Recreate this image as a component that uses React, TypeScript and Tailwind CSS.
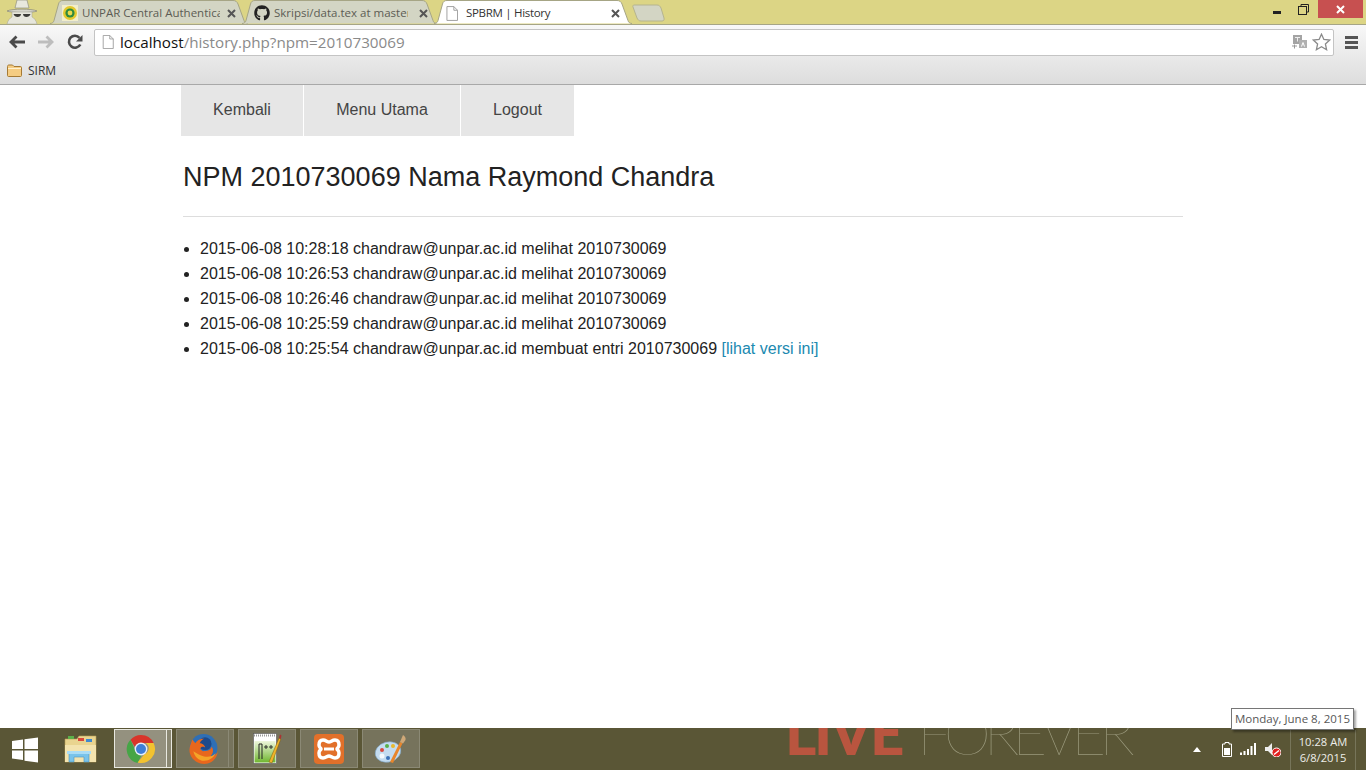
import React from "react";
import { FaGithub } from "react-icons/fa";

const uiFont = "font-['Open_Sans','Noto_Sans',sans-serif]";

const history = [
  "2015-06-08 10:28:18 chandraw@unpar.ac.id melihat 2010730069",
  "2015-06-08 10:26:53 chandraw@unpar.ac.id melihat 2010730069",
  "2015-06-08 10:26:46 chandraw@unpar.ac.id melihat 2010730069",
  "2015-06-08 10:25:59 chandraw@unpar.ac.id melihat 2010730069",
];

const PageIcon = ({ className }: { className?: string }) => (
  <svg className={className} viewBox="0 0 13 16" fill="none">
    <path d="M1 .5h7.500L12.500 4.500v11H1z" fill="#fff" stroke="#9a9a9a" />
    <path d="M8.500.5v4h4" stroke="#9a9a9a" />
  </svg>
);

const CloseX = ({ color = "#555" }: { color?: string }) => (
  <svg width="9" height="9" viewBox="0 0 9 9">
    <path d="M1 1l7 7M8 1L1 8" stroke={color} strokeWidth="2" />
  </svg>
);

const tabPath = (w: number) =>
  `M0 23.500C2 23.500 3.500 22.500 4 20.500L8.500 4C9.200 1.500 10.500 .5 13 .5L${w - 15} .5C${w - 12.5} .5 ${w - 11} 1.500 ${w - 10} 4L${w - 4} 20.500C${w - 3.5} 22.500 ${w - 2} 23.500 ${w} 23.500`;

const Tab = ({
  width,
  active,
  icon,
  title,
  textWidth,
  closeGap,
}: {
  width: number;
  active?: boolean;
  icon: React.ReactNode;
  title: string;
  textWidth: string;
  closeGap: string;
}) => (
  <div className="relative h-[24px] shrink-0" style={{ width }}>
    <svg className="absolute inset-0" width={width} height="24" viewBox={`0 0 ${width} 24`}>
      <path d={tabPath(width)} fill={active ? "#fff" : "#d3d5c4"} stroke="#a6a585" />
    </svg>
    <div className="relative flex h-full items-center pl-[12px] pt-[2px]">
      <div className="flex w-[20px] shrink-0 items-center">{icon}</div>
      <div
        className={`${textWidth} shrink-0 overflow-hidden whitespace-nowrap ${uiFont} ${active ? "text-[11.5px] tracking-[-0.3px] text-[#333]" : "text-[11.5px] text-[#5c5c54]"}`}
      >
        {title}
      </div>
      <div className={closeGap}>
        <CloseX />
      </div>
    </div>
  </div>
);

const UnparIcon = () => (
  <svg width="16" height="16" viewBox="0 0 16 16">
    <rect width="16" height="16" fill="#f2eecb" />
    <circle cx="8" cy="8" r="7" fill="#e3c92c" />
    <circle cx="8" cy="8" r="4.600" fill="#2f8a3e" />
    <circle cx="8" cy="8" r="2.400" fill="#e9d94a" />
  </svg>
);

const Chrome = () => (
  <svg width="30" height="30" viewBox="0 0 30 30">
    <path d="M15 1a14 14 0 0 1 12.600 8H15a6 6 0 0 0-6 4L4.500 5.800A14 14 0 0 1 15 1z" fill="#d8352a" />
    <path d="M4.500 5.800L9.600 17a6 6 0 0 0 6 4l-4 8A14 14 0 0 1 4.500 5.800z" fill="#46a546" />
    <path d="M27.600 9A14 14 0 0 1 11.600 28.600L18.500 20A6 6 0 0 0 19.500 9z" fill="#f2c230" />
    <circle cx="15" cy="15" r="6.400" fill="#e8eef8" />
    <circle cx="15" cy="15" r="5" fill="#3f7fd6" />
  </svg>
);

const Firefox = () => (
  <svg width="32" height="32" viewBox="0 0 30 30">
    <circle cx="15.500" cy="14" r="13" fill="#2f6fb5" />
    <circle cx="17" cy="10" r="6" fill="#1c4a8c" />
    <path d="M5 6c-1 3-4 8-2 14 2 6 8 9 13 9 7 0 12-5 13-12-1 3-4 5-7 5 3-3 3-7 1-9-1 4-5 4-8 4-3-1-3-3-1-4 1 0 2 0 3 .5 0-2-3-4-5-4 1-2 2-3 4-4-4 0-7 2-8 4-1-1-2-2-3-3.500z" fill="#e8671d" />
    <path d="M6 17c1 5 5 9 10 9 5 0 9-3 11-7-3 3-7 4-11 3-4-1-7-3-10-5z" fill="#f4a428" />
  </svg>
);

const NotepadPlus = () => (
  <svg width="32" height="34" viewBox="0 0 30 34">
    <rect x="1.500" y="1.500" width="23" height="30" fill="#fff" stroke="#555" strokeWidth=".6" />
    <defs>
      <linearGradient id="npp" x1="0" y1="0" x2="0" y2="1">
        <stop offset="0" stopColor="#eef6dc" />
        <stop offset="1" stopColor="#6fb62f" />
      </linearGradient>
    </defs>
    <rect x="2.500" y="9" width="21" height="21.500" fill="url(#npp)" />
    <path d="M2 3.500h22" stroke="#999" strokeDasharray="1 1" strokeWidth="2" />
    <path d="M7 27V12h3v15" stroke="#222" fill="none" strokeWidth="1" />
    <path d="M12 15h4M14 13v4M17 15h4M19 13v4" stroke="#222" strokeWidth=".9" />
    <path d="M17 30L27 6l1.800 1L20 31z" fill="#f0b429" stroke="#7a5a10" strokeWidth=".5" />
    <path d="M27 6l1-3.500 1.500 1-.7 3.500z" fill="#a33" />
  </svg>
);

const Xampp = () => (
  <svg width="32" height="32" viewBox="0 0 32 32">
    <rect x="1" y="1" width="30" height="30" rx="4" fill="#e2702a" />
    <path
      d="M10 7c3 0 4 2 6 2s3-2 6-2 4 2 4 5-2 3-2 4 2 1 2 4-1 5-4 5-4-2-6-2-3 2-6 2-4-2-4-5 2-3 2-4-2-1-2-4 1-5 4-5z"
      fill="none"
      stroke="#fff"
      strokeWidth="3.500"
    />
    <path d="M11 16h10" stroke="#fff" strokeWidth="3" />
  </svg>
);

const Palette = () => (
  <svg width="34" height="32" viewBox="0 0 34 32">
    <ellipse cx="14" cy="19" rx="13" ry="10" transform="rotate(-15 14 19)" fill="#c4dcf0" stroke="#7ea6c6" strokeWidth=".6" />
    <circle cx="8" cy="17" r="2" fill="#d9483b" />
    <circle cx="13" cy="13" r="2" fill="#59b14a" />
    <circle cx="19" cy="13" r="2" fill="#e8b92e" />
    <circle cx="8" cy="23" r="2.500" fill="#f4f9fd" />
    <circle cx="14" cy="25" r="2" fill="#3d72b8" />
    <path d="M16 29L26 9l2.500 1.200L19 30z" fill="#e8862c" />
    <path d="M26 9l3-7c2 1 3 3 2.500 5L29 10.500z" fill="#cfa878" />
  </svg>
);

const ExplorerIcon = () => (
  <svg width="34" height="32" viewBox="0 0 34 32">
    <path d="M1 6h12l2-3h17v26H1z" fill="#e9d48f" stroke="#b59c55" strokeWidth=".6" />
    <rect x="4" y="3" width="6" height="3" fill="#5bb04a" />
    <rect x="14" y="5" width="6" height="3" fill="#d9483b" />
    <rect x="22" y="6" width="6" height="3" fill="#3f8ad0" />
    <path d="M1 12h31v17H1z" fill="#f3e3ae" />
    <path d="M5 29V19h20v10h-5v-5h-10v5z" fill="#79c3ea" stroke="#4b93bf" strokeWidth=".6" />
    <path d="M3 18h24v3H3z" fill="#a9dcf5" />
  </svg>
);

const TaskButton = ({
  width,
  active,
  stack,
  children,
}: {
  width: string;
  active?: boolean;
  stack?: boolean;
  children: React.ReactNode;
}) => (
  <div className="flex h-[39px] shrink-0">
    <div
      className={`flex ${width} items-center justify-center border ${active ? "border-[#e8e8e0] bg-[#94917f]" : "border-[#8b8975] bg-[#76735c]"}`}
    >
      {children}
    </div>
    {stack && (
      <div className={`w-[5px] border border-l-0 ${active ? "border-[#e8e8e0] bg-[#8a8772]" : "border-[#8b8975] bg-[#76735c]"}`} />
    )}
  </div>
);

export default function App() {
  return (
    <div className="flex h-screen flex-col overflow-hidden bg-white font-['Liberation_Sans',Arial,sans-serif]">
      {/* tab strip */}
      <div className="relative flex h-[24px] shrink-0 bg-[#dcd585] pl-[50px]">
        <svg className="absolute left-[4px] top-0" width="36" height="24" viewBox="0 0 36 24">
          <path d="M11 8l2-8h10l2 8z" fill="#e8e8de" stroke="#8f8f80" strokeWidth=".7" />
          <path d="M3 11c5-2.500 25-2.500 30 0-4 2-26 2-30 0z" fill="#d6d6cc" stroke="#85857a" strokeWidth=".7" />
          <path d="M8 12h20v5c2 1 4 3 5 7H3c1-4 3-6 5-7z" fill="#e6e6dc" stroke="#a0a094" strokeWidth=".5" />
          <path d="M9.500 14h7.500c0 4-6.500 4-7.500 0zM19 14h7.500c-1 4-7.500 4-7.500 0z" fill="#3c3c38" />
        </svg>
        <Tab width={198} icon={<UnparIcon />} title="UNPAR Central Authentication" textWidth="w-[138px]" closeGap="ml-[7px]" />
        <div className="-ml-[6px]">
          <Tab width={195} icon={<FaGithub className="text-[16px] text-[#222]" />} title="Skripsi/data.tex at master" textWidth="w-[134px]" closeGap="ml-[11px]" />
        </div>
        <div className="-ml-[3px]">
          <Tab width={198} active icon={<PageIcon className="h-[15px] w-[12px]" />} title="SPBRM | History" textWidth="w-[129px]" closeGap="ml-[16px]" />
        </div>
        <svg className="mt-[4px]" width="34" height="18" viewBox="0 0 34 18">
          <path d="M2 1h23c2 0 3 1 4 3l3 10c.5 2-.5 3-2 3H9c-2 0-3-1-4-3L1 3c-.4-1 0-2 1-2z" fill="#d3d5c4" stroke="#b5b48f" />
        </svg>
        <div className="ml-auto flex h-[18px] items-start">
          <div className="mr-[17px] mt-[11px] h-[2.500px] w-[8px] bg-[#222]" />
          <svg className="mr-[9px] mt-[4px]" width="11" height="11" viewBox="0 0 11 11" fill="none">
            <path d="M3 2.500V.5h7.500v7.500H8.500" stroke="#222" />
            <rect x=".5" y="2.500" width="8" height="8" stroke="#222" />
          </svg>
          <div className="mr-[3px] flex h-[18px] w-[45px] items-center justify-center bg-[#c75050]">
            <CloseX color="#fff" />
          </div>
        </div>
      </div>

      {/* toolbar */}
      <div className="shrink-0 border-b border-t border-b-[#a8a8a8] border-t-[#a6a585] bg-gradient-to-b from-[#f8f8f8] to-[#dddddd]">
        <div className="flex h-[34px] items-center">
          <div className="flex w-[94px] shrink-0 items-center pl-[9px]">
            <svg width="16" height="14" viewBox="0 0 16 14" fill="none">
              <path d="M7.500 1.500L2 7l5.500 5.500M2 7h14" stroke="#4a4a4a" strokeWidth="2.800" />
            </svg>
            <svg className="ml-[13px]" width="16" height="14" viewBox="0 0 16 14" fill="none">
              <path d="M8.500 1.500L14 7l-5.500 5.500M14 7H0" stroke="#bdbdbd" strokeWidth="2.800" />
            </svg>
            <svg className="ml-[13px]" width="16" height="16" viewBox="0 0 16 16" fill="none">
              <path d="M13.300 10.500A6 6 0 1 1 12.500 3.800" stroke="#4a4a4a" strokeWidth="2.600" />
              <path d="M15.500 1v6.500H9z" fill="#4a4a4a" />
            </svg>
          </div>
          <div className="flex h-[27px] w-[1240px] shrink-0 items-center rounded-[2px] border border-[#c4c4c4] bg-white pl-[7px] pr-[2px]">
            <PageIcon className="h-[14px] w-[12px] shrink-0" />
            <div className={`ml-[6px] flex-1 text-[15.2px] text-[#8a8a8a] ${uiFont}`}>
              <span className="text-[#111]">localhost</span>/history.php?npm=2010730069
            </div>
            <svg width="16" height="16" viewBox="0 0 16 16">
              <rect x="1" y="1" width="9" height="9" fill="#a4a4a4" />
              <rect x="7" y="6" width="8" height="8" fill="#b0b0b0" />
              <path d="M3 3.500h5M5.500 3.500v4" stroke="#eee" />
              <path d="M9.500 12.500l1.500-4 1.500 4" stroke="#fff" fill="none" />
              <path d="M0 12h5M2.500 10.500v4" stroke="#999" />
            </svg>
            <svg className="ml-[4px]" width="19" height="18" viewBox="0 0 19 18" fill="#fff" stroke="#8a8a8a" strokeWidth="1.300">
              <path d="M9.500 1.200l2.400 5.300 5.800.6-4.300 3.900 1.200 5.700-5.100-2.900-5.100 2.900 1.200-5.700L1.300 7.100l5.800-.6z" />
            </svg>
          </div>
          <div className="ml-[11px] flex flex-col gap-[2px]">
            <div className="h-[3px] w-[13px] bg-[#555]" />
            <div className="h-[3px] w-[13px] bg-[#555]" />
            <div className="h-[3px] w-[13px] bg-[#555]" />
          </div>
        </div>
        <div className="flex h-[25px] items-center pb-[2px] pl-[7px]">
          <svg width="15" height="13" viewBox="0 0 15 13">
            <path d="M.5 2.500C.5 1.500 1 1 2 1h3.500L7 2.500h6.500c.7 0 1 .5 1 1v8c0 .7-.5 1-1 1h-12c-.6 0-1-.4-1-1z" fill="#f5cc82" stroke="#a57a35" />
            <path d="M1 4.500h13" stroke="#fff1cf" />
          </svg>
          <span className={`ml-[6px] text-[12px] text-[#333] ${uiFont}`}>SIRM</span>
        </div>
      </div>

      {/* page */}
      <main className="flex-1 overflow-hidden">
        <nav className="ml-[181px] flex h-[51px] w-fit gap-px text-[16px] text-[#444]">
          <a className="flex w-[122px] items-center justify-center bg-[#e6e6e6] pb-[2px]">Kembali</a>
          <a className="flex w-[156px] items-center justify-center bg-[#e6e6e6] pb-[2px]">Menu Utama</a>
          <a className="flex w-[113px] items-center justify-center bg-[#e6e6e6] pb-[2px]">Logout</a>
        </nav>
        <div className="ml-[183px] w-[1000px] text-[#222]">
          <h3 className="mt-[24px] text-[27px] leading-[34px]">NPM 2010730069 Nama Raymond Chandra</h3>
          <hr className="mt-[22px] border-[#dddddd]" />
          <ul className="mt-[19px] list-disc pl-[17px] text-[16px] leading-[25px]">
            {history.map((line, i) => (
              <li key={i}>{line}</li>
            ))}
            <li>
              2015-06-08 10:25:54 chandraw@unpar.ac.id membuat entri 2010730069{" "}
              <a className="text-[#2089b0]">[lihat versi ini]</a>
            </li>
          </ul>
        </div>
      </main>

      {/* taskbar */}
      <div className="relative flex h-[42px] shrink-0 items-start overflow-visible bg-[#5a5636] pt-[1px]">
        <div className="absolute inset-0 overflow-hidden">
          <div className="absolute left-[785px] top-[-26px] flex items-baseline gap-[15px] whitespace-nowrap font-['Lato','Liberation_Sans',sans-serif] text-[60px] leading-[60px]">
            <span className="font-black text-[#b9553f] [letter-spacing:-2.200px]">LIVE</span>
            <span className="font-thin text-[#9a997c] [letter-spacing:-7px]">FOREVER</span>
          </div>
        </div>
        <div className="relative flex w-[114px] shrink-0 items-center pl-[12px]">
          <svg className="mt-[6px]" width="26" height="26" viewBox="0 0 26 26" fill="#fff">
            <path d="M0 4l11-1.500V12H0zM12.500 2.300L26 .5V12H12.500zM0 13.500h11V23L0 21.500zM12.500 13.500H26V25.500L12.500 23.700z" />
          </svg>
          <div className="ml-[26px] mt-[4px]">
            <ExplorerIcon />
          </div>
        </div>
        <div className="relative flex items-center gap-[4px]">
          <TaskButton width="w-[53px]" active stack>
            <Chrome />
          </TaskButton>
          <TaskButton width="w-[53px]" stack>
            <Firefox />
          </TaskButton>
          <TaskButton width="w-[58px]">
            <NotepadPlus />
          </TaskButton>
          <TaskButton width="w-[58px]">
            <Xampp />
          </TaskButton>
          <TaskButton width="w-[58px]">
            <Palette />
          </TaskButton>
        </div>
        <div className="relative ml-auto flex h-[40px] items-center">
          <svg width="8" height="5" viewBox="0 0 8 5" fill="#fff">
            <path d="M4 0l4 5H0z" />
          </svg>
          <svg className="ml-[21px]" width="10" height="15" viewBox="0 0 10 15" fill="none">
            <path d="M3 .5h4v1.500h2.500v12.500h-9V2H3z" stroke="#fff" />
            <rect x="2" y="6" width="6" height="7" fill="#fff" />
          </svg>
          <svg className="ml-[8px]" width="16" height="12" viewBox="0 0 16 12" fill="#fff">
            <path d="M0 9.500h2V12H0zM3.500 8h2v4h-2zM7 6h2v6H7zM10.500 3h2v9h-2zM14 0h2v12h-2z" />
          </svg>
          <svg className="ml-[9px]" width="16" height="15" viewBox="0 0 16 15">
            <path d="M0 5h3l4-4v12l-4-4H0z" fill="#eee" />
            <circle cx="11.500" cy="10.500" r="4.500" fill="#e02020" stroke="#fff" />
            <path d="M9 12.500l5-4" stroke="#fff" strokeWidth="1.500" />
          </svg>
          <div className="ml-[9px] mt-[1px] flex h-[40px] w-[66px] flex-col items-center justify-center border-x border-[#77755a] font-['Open_Sans',sans-serif] text-[11.2px] leading-[16px] text-[#eeeeea]">
            <span>10:28 AM</span>
            <span>6/8/2015</span>
          </div>
          <div className="w-[10px]" />
        </div>
        {/* date tooltip */}
        <div className="absolute bottom-[40px] left-[1231px] flex h-[22px] w-[123px] items-center justify-center border border-[#767676] bg-white font-['Open_Sans',sans-serif] text-[11.5px] text-[#575757] shadow-[2px_2px_2px_rgba(0,0,0,0.35)]">
          Monday, June 8, 2015
        </div>
      </div>
    </div>
  );
}
